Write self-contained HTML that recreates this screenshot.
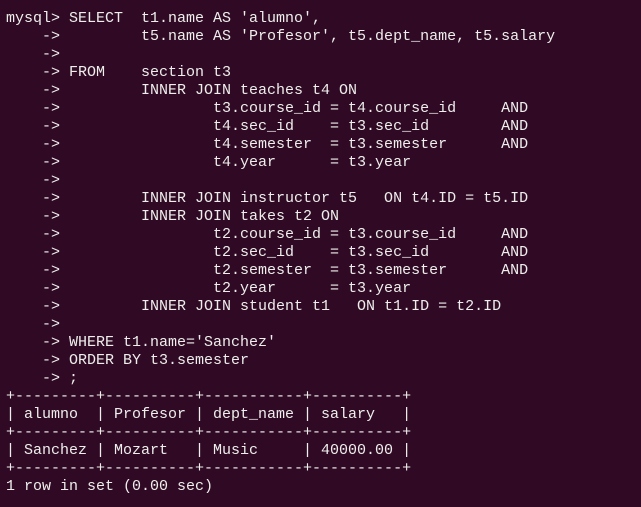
<!DOCTYPE html>
<html><head><style>
html,body{margin:0;padding:0;background:#300a24;width:641px;height:507px;overflow:hidden}
pre{margin:0;padding:10px 0 0 6px;font-family:"Liberation Mono",monospace;font-size:15px;line-height:18px;color:#eeeeec;letter-spacing:0}
</style></head><body><pre>mysql&gt; SELECT  t1.name AS 'alumno',
    -&gt;         t5.name AS 'Profesor', t5.dept_name, t5.salary
    -&gt;
    -&gt; FROM    section t3
    -&gt;         INNER JOIN teaches t4 ON
    -&gt;                 t3.course_id = t4.course_id     AND
    -&gt;                 t4.sec_id    = t3.sec_id        AND
    -&gt;                 t4.semester  = t3.semester      AND
    -&gt;                 t4.year      = t3.year
    -&gt;
    -&gt;         INNER JOIN instructor t5   ON t4.ID = t5.ID
    -&gt;         INNER JOIN takes t2 ON
    -&gt;                 t2.course_id = t3.course_id     AND
    -&gt;                 t2.sec_id    = t3.sec_id        AND
    -&gt;                 t2.semester  = t3.semester      AND
    -&gt;                 t2.year      = t3.year
    -&gt;         INNER JOIN student t1   ON t1.ID = t2.ID
    -&gt;
    -&gt; WHERE t1.name='Sanchez'
    -&gt; ORDER BY t3.semester
    -&gt; ;
+---------+----------+-----------+----------+
| alumno  | Profesor | dept_name | salary   |
+---------+----------+-----------+----------+
| Sanchez | Mozart   | Music     | 40000.00 |
+---------+----------+-----------+----------+
1 row in set (0.00 sec)
</pre></body></html>
